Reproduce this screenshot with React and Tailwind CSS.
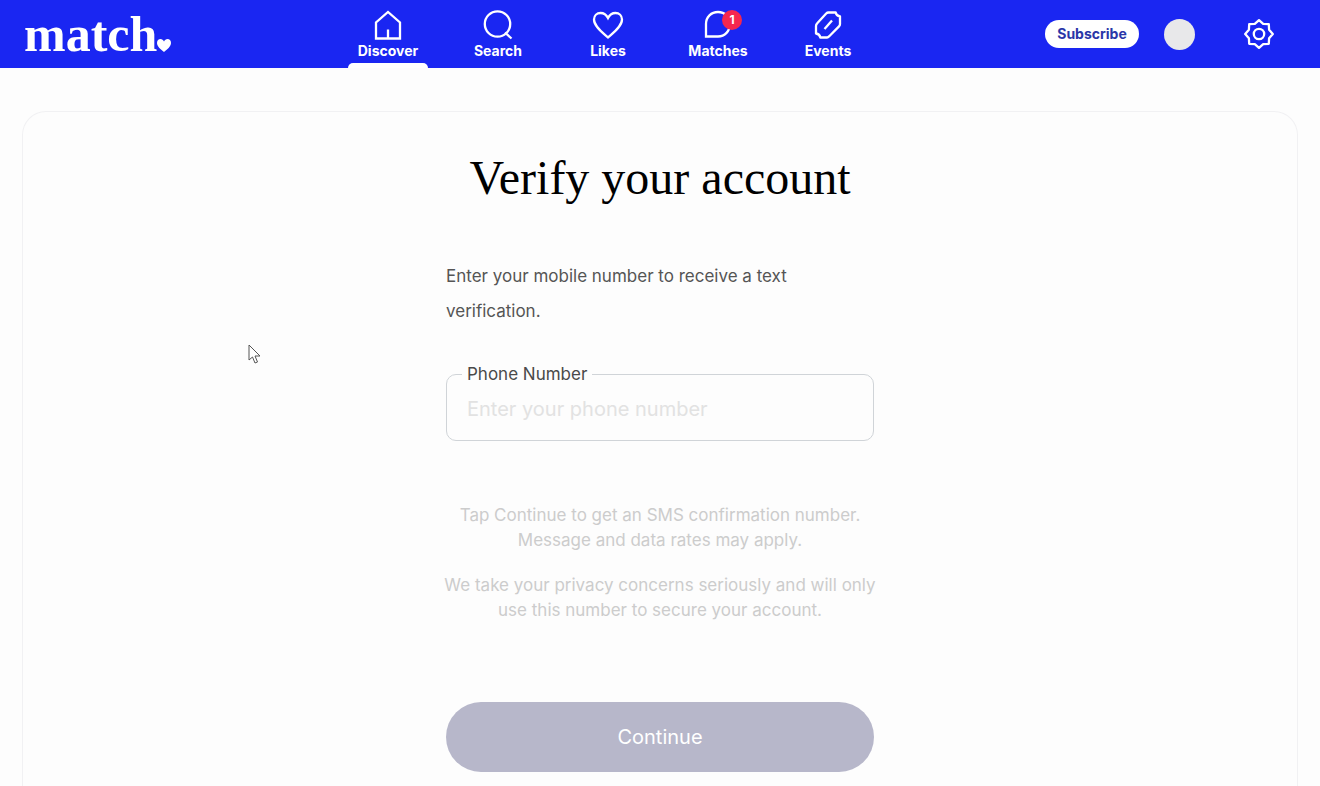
import { useState } from 'react';
import clsx from 'clsx';

const iconProps = {
  width: 32,
  height: 32,
  viewBox: '0 0 32 32',
  fill: 'none',
  stroke: 'currentColor',
  strokeWidth: 2.3,
  'aria-hidden': true,
};

const HomeIcon = () => (
  <svg {...iconProps}>
    <path d="M4 29.500V13.500L16 3l12 10.500v16Z" />
    <path d="M16 29.500v-9" />
  </svg>
);

const SearchIcon = () => (
  <svg {...iconProps}>
    <circle cx="15.500" cy="15" r="12.700" />
    <path d="m23 23.500 6.500 6" />
  </svg>
);

const HeartIcon = () => (
  <svg {...iconProps}>
    <path d="M16 28.500C11 24 2 17.500 2 10.500 2 6.500 5 4 8.500 4 12 4 14.500 6 16 9c1.500-3 4-5 7.500-5C27 4 30 6.500 30 10.500c0 7-9 13.500-14 18Z" />
  </svg>
);

const ChatIcon = () => (
  <svg {...iconProps}>
    <path d="M4 27.500V15C4 8 9.200 3 16 3s12 5 12 12-5.200 12.500-12 12.500Z" />
  </svg>
);

const TicketIcon = () => (
  <svg {...iconProps}>
    <path
      strokeLinejoin="round"
      d="M16.500 3.500h7.200c.3 1.900 2 3.600 4.300 4v7.500c0 1-.3 1.700-1 2.400L17.500 27c-.7.700-1.400 1.500-2.400 1.500H8.300c-.3-1.900-2-3.700-4.300-4V17c0-1 .3-1.700 1-2.400L14.200 4.500c.7-.7 1.300-1 2.300-1Z"
    />
    <path d="m12.500 20 7.500-8.500" />
  </svg>
);

const GearIcon = () => (
  <svg {...iconProps} strokeLinejoin="round">
    <path d="M16 2.200 20.200 5.900 25.800 6.200 26.100 11.800 29.800 16 26.100 20.200 25.800 25.800 20.200 26.100 16 29.800 11.800 26.100 6.200 25.800 5.900 20.200 2.200 16 5.900 11.800 6.200 6.200 11.800 5.900Z" />
    <circle cx="16" cy="16" r="5.200" />
  </svg>
);

const navItems = [
  { label: 'Discover', Icon: HomeIcon, active: true },
  { label: 'Search', Icon: SearchIcon },
  { label: 'Likes', Icon: HeartIcon },
  { label: 'Matches', Icon: ChatIcon, badge: 1 },
  { label: 'Events', Icon: TicketIcon },
];

function Header() {
  return (
    <header className="flex h-[68px] items-center bg-[#1a26f2] pr-[45px] text-white">
      <div className="w-[333px] shrink-0 pl-6">
        <a href="#" className="inline-flex items-end font-['Liberation_Serif',serif] text-[50px] leading-[56px] font-bold">
          match
          <svg width="14" height="13" viewBox="0 0 14 13" fill="currentColor" className="mb-2.5" aria-hidden="true">
            <path d="M7 13C4 10.500 0 7.500 0 4 0 1.500 1.500 0 3.500 0 5 0 6.300 1 7 2.500 7.700 1 9 0 10.500 0 12.500 0 14 1.500 14 4c0 3.500-4 6.500-7 9Z" />
          </svg>
        </a>
      </div>

      <nav className="flex self-stretch">
        {navItems.map(({ label, Icon, active, badge }) => (
          <a key={label} href="#" className="flex w-[110px] flex-col items-center pt-[9px]">
            <span className="relative">
              <Icon />
              {badge && (
                <span className="absolute top-px -right-2 flex size-5 items-center justify-center rounded-full bg-[#f5274e] text-xs font-bold">
                  {badge}
                </span>
              )}
            </span>
            <span className="text-sm leading-5 font-bold">{label}</span>
            <span className={clsx('mt-auto h-[5px] w-20 rounded-t-md', active && 'bg-white')} />
          </a>
        ))}
      </nav>

      {/* Account actions */}
      <div className="ml-auto flex items-center">
        <button className="h-7 w-[94px] rounded-full bg-white text-sm font-bold text-[#2a36a8]">Subscribe</button>
        <button aria-label="Profile" className="ml-[25px] size-[31px] rounded-full bg-[#e8e8ea]" />
        <button aria-label="Settings" className="ml-12">
          <GearIcon />
        </button>
      </div>
    </header>
  );
}

export default function App() {
  const [phone, setPhone] = useState('');

  return (
    <div className="relative flex min-h-screen flex-col bg-[#fdfdfd] font-[Inter,sans-serif]">
      <Header />

      <main className="mx-[22px] mt-[43px] flex-1 rounded-t-3xl border border-b-0 border-[#f1f1f3] px-6 pt-9 pb-3">
        <h1 className="text-center font-['Liberation_Serif',serif] text-[48px] leading-[60px] text-black">
          Verify your account
        </h1>

        <form className="mx-auto mt-[51px] w-full max-w-[428px]" onSubmit={(e) => e.preventDefault()}>
          <p className="text-[17px] leading-[35px] text-[#555]">
            Enter your mobile number to receive a text verification.
          </p>

          <fieldset className="mt-[33px] h-[79px] rounded-[10px] border border-[#d0d4d8] px-[15px]">
            <legend className="px-[5px] text-[17px] leading-6 text-[#4a4a4a]">
              <label htmlFor="phone">Phone Number</label>
            </legend>
            <input
              id="phone"
              type="tel"
              value={phone}
              onChange={(e) => setPhone(e.target.value)}
              placeholder="Enter your phone number"
              className="h-[46px] w-full px-[5px] text-xl text-[#4a4a4a] outline-none placeholder:text-[#e2e2e2]"
            />
          </fieldset>

          <div className="-mx-2 mt-[62px] space-y-5 text-center text-[17px] leading-[25px] text-[#ccc]">
            <p>
              Tap Continue to get an SMS confirmation number.
              <br />
              Message and data rates may apply.
            </p>
            <p>
              We take your privacy concerns seriously and will only
              <br />
              use this number to secure your account.
            </p>
          </div>

          <button type="submit" className="mt-[79px] h-[70px] w-full rounded-full bg-[#b7b7ca] text-xl text-white">
            Continue
          </button>
        </form>
      </main>

      {/* Pointer */}
      <svg
        width="14"
        height="20"
        viewBox="0 0 14 20"
        className="absolute top-[344px] left-[248px]"
        fill="#fff"
        stroke="#555"
        aria-hidden="true"
      >
        <path d="M1 1v15l3.500-3 2.500 6 2.500-1-2.500-6H12Z" />
      </svg>
    </div>
  );
}
